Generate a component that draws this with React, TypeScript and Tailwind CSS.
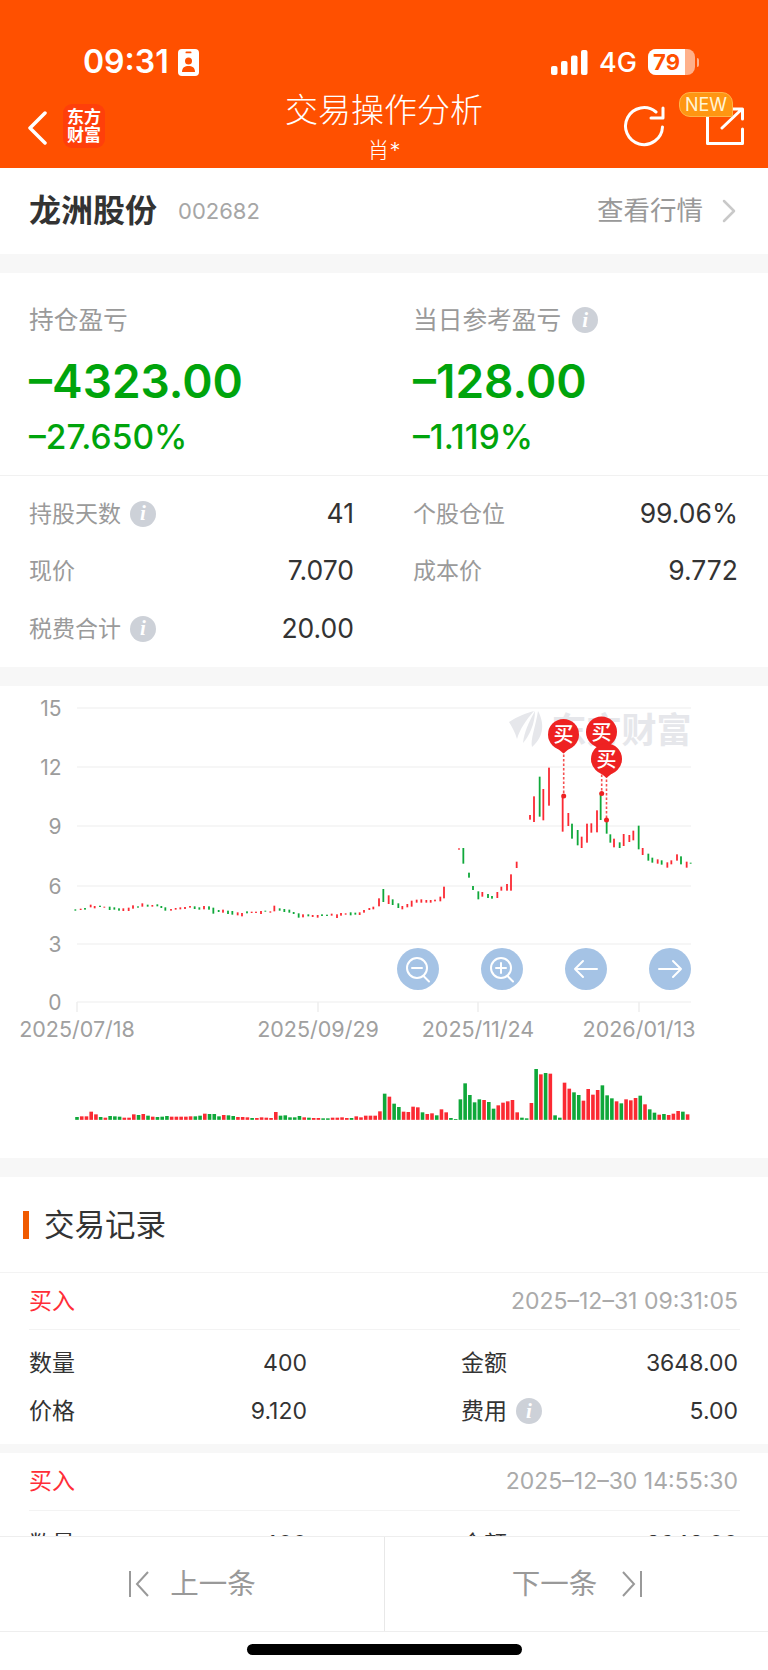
import React from "react";

type C = [number, number, number, string];
// x, top, bottom in reference-zoom coordinates (3x from chart crop)
const left: C[] = ([
[226,688,692,"g"],[242,686,690,"r"],[255,684,689,"g"],[272,674,682,"r"],[284,678,685,"r"],[300,677,681,"g"],[313,680,682,"r"],[329,680,690,"g"],[343,682,689,"g"],[357,685,692,"g"],[370,685,693,"r"],[386,683,693,"r"],[399,676,686,"r"],[414,679,683,"g"],[427,670,680,"r"],[443,674,680,"g"],[457,675,680,"r"],[472,673,679,"g"],[484,678,684,"g"],[496,682,692,"g"],[513,687,692,"r"],[527,684,689,"r"],[541,682,688,"r"],[555,681,687,"r"],[570,678,683,"r"],[584,679,687,"g"],[598,682,689,"g"],[612,678,688,"r"],[627,679,689,"g"],[640,683,701,"g"],[656,690,696,"g"],[669,689,698,"r"],[684,692,702,"g"],[697,693,704,"g"],[713,697,706,"r"],[726,699,709,"r"],[741,694,700,"g"],[755,695,699,"r"],[768,695,699,"r"],[783,693,702,"r"],[796,692,695,"g"],[811,694,698,"r"],[823,677,694,"r"],[839,685,692,"g"],[853,687,696,"g"],[868,689,698,"g"],[881,696,702,"g"],[896,700,713,"g"],[909,703,712,"r"],[925,703,709,"g"],[938,705,711,"r"],[953,705,713,"r"],[966,703,708,"g"],[981,704,708,"g"],[995,701,707,"r"],[1011,703,714,"r"],[1023,699,707,"r"],[1037,700,704,"r"],[1052,697,706,"g"],[1066,698,704,"g"],[1079,697,705,"r"],[1092,690,698,"r"],[1108,684,690,"r"],[1120,680,688,"r"],
] as C[]);
const right: C[] = ([
[-3,655,679,"r"],[10,627,666,"g"],[26,646,672,"r"],[38,658,675,"g"],[55,670,684,"g"],[67,678,688,"r"],[82,672,682,"r"],[95,662,680,"r"],[110,659,668,"r"],[124,658,668,"r"],[139,660,668,"r"],[152,660,668,"r"],[165,659,664,"r"],[181,650,664,"r"],[192,620,655,"r"],
[237,505,509,"r"],[250,504,551,"g"],[267,578,593,"g"],[279,618,630,"g"],[295,634,658,"g"],[307,636,650,"r"],[324,642,654,"g"],[336,648,656,"g"],[352,636,654,"r"],[364,620,632,"r"],[381,612,632,"r"],[393,583,632,"r"],[410,545,564,"r"],[450,405,419,"r"],[462,349,426,"r"],[479,290,410,"g"],[490,327,421,"r"],[507,263,377,"r"],[548,350,455,"r"],[565,399,438,"r"],[576,431,476,"g"],[593,450,496,"g"],[605,470,504,"r"],[621,431,488,"r"],[634,430,458,"r"],[651,391,457,"r"],[662,340,420,"g"],[680,420,461,"g"],[691,463,488,"g"],[702,476,502,"r"],[719,487,504,"g"],[731,462,498,"r"],[748,465,486,"r"],[760,452,481,"r"],[776,437,508,"g"],[788,504,525,"r"],[805,521,542,"g"],[817,533,548,"g"],[833,538,551,"r"],[845,541,554,"g"],[862,547,563,"r"],[874,541,553,"r"],[891,523,542,"r"],[903,529,553,"g"],[920,545,563,"r"],[932,548,551,"g"],
] as C[]);
const candles = [
  ...left.map(([x, t, b, c]) => ({ x: x / 3, y: 680 + t / 3, h: (b - t) / 3, c })),
  ...right.map(([x, t, b, c]) => ({ x: 380 + x / 3, y: 680 + t / 3, h: (b - t) / 3, c })),
];

const vols: [string, number][] = [
["g",1311],["r",1309],["r",1309],["r",1295],["r",1303],["g",1311],["r",1313],["g",1308],["g",1309],["g",1310],["r",1313],["r",1313],["r",1303],["g",1305],["r",1302],["g",1307],["r",1310],["g",1311],["g",1310],["g",1308],["r",1310],["r",1310],["r",1310],["r",1310],["r",1309],["g",1309],["g",1307],["r",1301],["g",1302],["g",1302],["g",1309],["r",1305],["g",1306],["g",1308],["r",1311],["r",1311],["r",1312],["g",1314],["r",1314],["r",1312],["r",1313],["r",1314],["r",1296],["g",1307],["g",1306],["g",1312],["g",1312],["g",1308],["r",1312],["g",1313],["r",1314],["r",1314],["g",1315],["g",1315],["r",1313],["r",1313],["r",1312],["r",1314],["g",1314],["r",1309],["r",1312],["r",1307],["r",1307],["r",1307],["r",1294],["g",1241],["r",1250],["g",1271],["g",1281],
["r",1295],["r",1296],["r",1280],["r",1282],["g",1297],["r",1302],["r",1300],["g",1306],["r",1288],["r",1297],["g",1314],["g",1317],["g",1258],["g",1210],["g",1245],["g",1267],["g",1258],["r",1260],["g",1266],["g",1286],["r",1276],["r",1268],["r",1264],["r",1260],["r",1297],["g",1313],["g",1315],["r",1269],["g",1167],["r",1183],["g",1179],["r",1181],["g",1306],["g",1313],["r",1208],["r",1226],["g",1237],["g",1245],["r",1262],["r",1227],["r",1244],["r",1230],["g",1216],["g",1246],["g",1255],["r",1264],["g",1270],["r",1258],["r",1261],["r",1254],["g",1247],["r",1273],["g",1288],["g",1298],["r",1304],["g",1302],["r",1305],["r",1301],["r",1293],["g",1295],["r",1303],
];

const RED = "#fb2a33";
const GREEN = "#0fa83a";

function Info() {
  return (
    <span className="inline-flex h-[26px] w-[26px] shrink-0 items-center justify-center rounded-full bg-[#cdd1d8] font-[family-name:'Liberation_Serif',serif] text-[21px] font-bold italic leading-none text-white">
      i
    </span>
  );
}

function Pin({ cx, cy }: { cx: number; cy: number }) {
  return (
    <g>
      <path d={`M${cx - 6} ${cy + 14} L${cx} ${cy + 19} L${cx + 6} ${cy + 14} Z`} fill="#ee2222" />
      <circle cx={cx} cy={cy} r={15.5} fill="#ee2222" />
      <text x={cx} y={cy + 7.5} textAnchor="middle" fontSize={20} fontWeight={500} fill="#fff">买</text>
    </g>
  );
}

function Stat({ label, value, info }: { label: string; value: string; info?: boolean }) {
  return (
    <div className="flex h-[57.5px] items-center justify-between">
      <span className="flex items-center gap-[9px] text-[23px] text-[#9a9a9a]">
        {label}
        {info && <Info />}
      </span>
      <span className="text-[26.500px] text-[#333]">{value}</span>
    </div>
  );
}

function Field({ label, value, info }: { label: string; value: string; info?: boolean }) {
  return (
    <div className="flex h-[48px] items-center justify-between">
      <span className="flex items-center gap-[9px] text-[23px] text-[#333]">
        {label}
        {info && <Info />}
      </span>
      <span className="text-[23px] text-[#333]">{value}</span>
    </div>
  );
}

function Chart() {
  const ys = [708, 767, 826, 886, 944, 1002];
  const labels = ["15", "12", "9", "6", "3", "0"];
  const ticks: [number, string][] = [[77, "2025/07/18"], [318, "2025/09/29"], [478, "2025/11/24"], [639, "2026/01/13"]];
  const btn = "#a5c3e5";
  return (
    <svg viewBox="0 686 768 472" width={768} height={472} className="block">
      {ys.map((y, i) => (
        <g key={y}>
          <line x1={77} x2={691} y1={y} y2={y} stroke="#f3f3f3" strokeWidth={1.5} />
          <text x={61.5} y={y + 8} textAnchor="end" fontSize={21} fill="#9c9c9c">{labels[i]}</text>
        </g>
      ))}
      {ticks.map(([x, t]) => (
        <g key={t}>
          <line x1={x} x2={x} y1={1002} y2={1012} stroke="#eeeeee" strokeWidth={1.5} />
          <text x={x} y={1036.5} textAnchor="middle" fontSize={21.5} fill="#a0a0a0">{t}</text>
        </g>
      ))}
      <g fill="#e6e7eb">
        <path d="M509 722 C518 716 527 713 534 711 C526 720 520 729 517 739 C515 732 512 727 509 722 Z" />
        <path d="M535 711 C529 722 524 732 523 743 C529 736 535 724 535 711 Z" />
        <path d="M538 711 C544 722 545 736 532 747 C530 740 536 725 538 711 Z" />
      </g>
      <text x={691.5} y={743} textAnchor="end" fontSize={35} fontWeight={700} fill="#e6e7eb">东方财富</text>

      {candles.map((c, i) => (
        <rect key={i} x={c.x - 0.9} y={c.y} width={1.8} height={Math.max(c.h, 1)} fill={c.c === "r" ? RED : GREEN} />
      ))}

      <g stroke="#f55050" strokeWidth={1.6} strokeDasharray="2.5 2">
        <line x1={563.7} x2={563.7} y1={750} y2={796} />
        <line x1={601.7} x2={601.7} y1={770} y2={793} />
        <line x1={606.5} x2={606.5} y1={775} y2={820} />
      </g>
      <circle cx={563.7} cy={796} r={2.5} fill="#ee2222" />
      <circle cx={601.7} cy={793.5} r={2.5} fill="#ee2222" />
      <circle cx={606.5} cy={820} r={2.5} fill="#ee2222" />
      <Pin cx={563.5} cy={734.5} />
      <Pin cx={601.5} cy={732} />
      <Pin cx={606.5} cy={759} />

      <circle cx={418} cy={969} r={21} fill={btn} />
      <circle cx={502} cy={969} r={21} fill={btn} />
      <circle cx={586} cy={969} r={21} fill={btn} />
      <circle cx={670} cy={969} r={21} fill={btn} />
      <g stroke="#fff" strokeWidth={2} fill="none" strokeLinecap="round" strokeLinejoin="round">
        <circle cx={417} cy={968} r={10} />
        <path d="M423.500 976 L429 981.500 M412 968 H422" />
        <circle cx={501} cy={968} r={10} />
        <path d="M507.500 976 L513 981.500 M496 968 H506 M501 963 V973" />
        <path d="M597 969 H575 M583 961 L575 969 L583 977" />
        <path d="M659 969 H681 M673 961 L681 969 L673 977" />
      </g>

      {vols.map(([c, top], i) => (
        <rect key={i} x={(231 + 14.2 * i) / 3 - 1.8} y={680 + top / 3} width={3.6} height={(1319.500 - top) / 3} fill={c === "r" ? RED : GREEN} />
      ))}
    </svg>
  );
}

export default function App() {
  return (
    <div className="flex h-[1670px] w-[768px] flex-col overflow-hidden bg-white font-[family-name:Inter,'Noto_Sans_CJK_SC',sans-serif]">
      {/* header */}
      <header className="h-[168px] shrink-0 bg-[#ff5000] pt-[44px] text-white">
        <div className="flex h-[36px] items-center justify-between pl-[83px] pr-[69px]">
          <div className="flex items-center gap-[9px]">
            <span className="text-[32px] font-semibold leading-none">09:31</span>
            <svg width="21" height="27" viewBox="0 0 21 27">
              <rect width="21" height="27" rx="4" fill="#fff" />
              <rect x="7.500" y="2.500" width="6" height="1.800" rx="0.900" fill="#ff5000" />
              <circle cx="10.500" cy="12" r="3.500" fill="#ff5000" />
              <path d="M4 23 C4 18.500 7 17 10.500 17 C14 17 17 18.500 17 23 Z" fill="#ff5000" />
            </svg>
          </div>
          <div className="flex items-center">
            <svg width="37" height="25" viewBox="0 0 37 25" fill="#fff">
              <rect x="0" y="16" width="6.500" height="9" rx="2" />
              <rect x="10" y="11" width="6.500" height="14" rx="2" />
              <rect x="20" y="5.500" width="6.500" height="19.500" rx="2" />
              <rect x="30" y="0" width="6.500" height="25" rx="2" />
            </svg>
            <span className="ml-[11px] text-[27px] font-medium leading-none">4G</span>
            <span className="ml-[11px] flex items-center">
              <span className="relative flex h-[26px] w-[47px] items-center overflow-hidden rounded-[8px] bg-[#ffb08a]">
                <span className="flex h-full w-[37px] items-center justify-center bg-white text-[22px] font-bold leading-none text-[#ff5000]">79</span>
              </span>
              <span className="ml-[2px] h-[9px] w-[2px] rounded-r bg-[#ffb08a]" />
            </span>
          </div>
        </div>
        <div className="grid h-[78px] grid-cols-[1fr_auto_1fr] pt-[10px]">
          <div className="flex items-start pl-[27px] pt-[4px]">
            <svg width="20" height="34" viewBox="0 0 20 34" className="mt-[17px]" fill="none" stroke="#fff" strokeWidth="3.500" strokeLinecap="round" strokeLinejoin="round">
              <path d="M18 2 L3 17 L18 32" />
            </svg>
            <div className="ml-[16px] mt-[10px] flex h-[44px] w-[42px] flex-col items-center justify-center rounded-[9px] bg-[#ff3f0a] text-[17px] font-semibold leading-[18px]">
              <span>东方</span>
              <span>财富</span>
            </div>
          </div>
          <div className="flex flex-col items-center font-light">
            <span className="text-[33px] leading-[40px]">交易操作分析</span>
            <span className="mt-[7px] text-[22px] leading-[26px]">肖*</span>
          </div>
          <div className="flex items-start justify-end pr-[24px]">
            <svg width="42" height="42" viewBox="0 0 42 42" className="mt-[16px]" fill="none" stroke="#fff" strokeWidth="3" strokeLinecap="round" strokeLinejoin="round">
              <path d="M33 6 A18.500 18.500 0 1 0 39.500 21" />
              <path d="M40 2 V12 H28" />
            </svg>
            <div className="relative ml-[41px] mt-[17px] h-[38px] w-[38px]">
              <svg width="38" height="38" viewBox="0 0 38 38" fill="none" stroke="#fff" strokeWidth="3" strokeLinecap="round" strokeLinejoin="round">
                <path d="M16 8 H1.500 V36.500 H36.500 V22" />
                <path d="M16 21 L36 2 M26 2 H36.500 V12" />
              </svg>
              <span className="absolute left-[-27px] top-[-15px] flex h-[25px] w-[54px] items-center justify-center rounded-[11px] rounded-br-[2px] border border-[#ffb347] bg-[#ff9612] text-[18px] leading-none text-[#fff5d6]">NEW</span>
            </div>
          </div>
        </div>
      </header>

      <main className="min-h-0 flex-1 overflow-hidden bg-[#f7f7f7]">
        {/* stock row */}
        <div className="flex h-[86px] items-center justify-between bg-white pl-[29px] pr-[32px]">
          <div className="flex items-center">
            <span className="text-[32px] font-bold text-[#333]">龙洲股份</span>
            <span className="ml-[21px] text-[22px] text-[#a6a6a6]">002682</span>
          </div>
          <div className="flex items-center text-[26.500px] text-[#999]">
            查看行情
            <svg width="14" height="24" viewBox="0 0 14 24" className="ml-[19px]" fill="none" stroke="#c9c9c9" strokeWidth="2.500" strokeLinecap="round" strokeLinejoin="round">
              <path d="M2 2 L12 12 L2 22" />
            </svg>
          </div>
        </div>

        {/* P&L */}
        <section className="mt-[19px] bg-white">
          <div className="grid h-[203px] grid-cols-[384px_1fr] border-b border-[#f1f1f1] pl-[29px] pt-[30px]">
            <div className="flex flex-col">
              <span className="text-[24.700px] leading-[34px] text-[#9a9a9a]">持仓盈亏</span>
              <span className="mt-[16px] text-[46px] font-semibold leading-[56px] text-[#00a40c]">–4323.00</span>
              <span className="mt-[8px] text-[33.500px] font-medium leading-[40px] text-[#00a40c]">–27.650%</span>
            </div>
            <div className="flex flex-col">
              <span className="flex items-center gap-[11px] text-[24.700px] leading-[34px] text-[#9a9a9a]">当日参考盈亏<Info /></span>
              <span className="mt-[16px] text-[46px] font-semibold leading-[56px] text-[#00a40c]">–128.00</span>
              <span className="mt-[8px] text-[33.500px] font-medium leading-[40px] text-[#00a40c]">–1.119%</span>
            </div>
          </div>
          <div className="grid h-[191px] grid-cols-[325px_325px] content-start gap-x-[59px] pl-[29px] pt-[9px]">
            <Stat label="持股天数" value="41" info />
            <Stat label="个股仓位" value="99.06%" />
            <Stat label="现价" value="7.070" />
            <Stat label="成本价" value="9.772" />
            <Stat label="税费合计" value="20.00" info />
          </div>
        </section>

        {/* chart */}
        <section className="mt-[19px] bg-white">
          <Chart />
        </section>

        {/* records */}
        <section className="mt-[19px] bg-white">
          <div className="flex h-[96px] items-center border-b border-[#f3f3f3] pl-[23px]">
            <span className="h-[28px] w-[6px] bg-[#f05a00]" />
            <span className="ml-[15px] text-[30.500px] text-[#333]">交易记录</span>
          </div>
          <div className="pl-[29px] pr-[28px]">
            <div className="flex h-[57px] items-center justify-between border-b border-[#f3f3f3]">
              <span className="text-[23px] text-[#ff2d37]">买入</span>
              <span className="pr-[2px] text-[23px] text-[#aaa]">2025–12–31 09:31:05</span>
            </div>
            <div className="grid h-[114px] grid-cols-[278px_277px] content-start gap-x-[154px] pt-[9px]">
              <Field label="数量" value="400" />
              <Field label="金额" value="3648.00" />
              <Field label="价格" value="9.120" />
              <Field label="费用" value="5.00" info />
            </div>
          </div>
        </section>
        <section className="mt-[9px] bg-white">
          <div className="pl-[29px] pr-[28px]">
            <div className="flex h-[58px] items-center justify-between border-b border-[#f3f3f3]">
              <span className="text-[23px] text-[#ff2d37]">买入</span>
              <span className="pr-[2px] text-[23px] text-[#aaa]">2025–12–30 14:55:30</span>
            </div>
            <div className="grid grid-cols-[278px_277px] content-start gap-x-[154px] pt-[9px]">
              <Field label="数量" value="400" />
              <Field label="金额" value="3648.00" />
            </div>
          </div>
        </section>
      </main>

      {/* footer */}
      <footer className="shrink-0 bg-white">
        <div className="grid h-[96px] grid-cols-[385px_1fr] border-y border-[#eeeeee] text-[28.500px] text-[#999]">
          <div className="flex items-center justify-center border-r border-[#e8e8e8]">
            <svg width="22" height="28" viewBox="0 0 22 28" fill="none" stroke="#999" strokeWidth="2">
              <path d="M2 1 V27 M20 2 L9 14 L20 26" />
            </svg>
            <span className="ml-[20px]">上一条</span>
          </div>
          <div className="flex items-center justify-center pl-[2px]">
            <span className="mr-[24px]">下一条</span>
            <svg width="22" height="28" viewBox="0 0 22 28" fill="none" stroke="#999" strokeWidth="2">
              <path d="M20 1 V27 M2 2 L13 14 L2 26" />
            </svg>
          </div>
        </div>
        <div className="flex h-[38px] justify-center pt-[12px]">
          <span className="h-[11px] w-[275px] rounded-full bg-black" />
        </div>
      </footer>
    </div>
  );
}
